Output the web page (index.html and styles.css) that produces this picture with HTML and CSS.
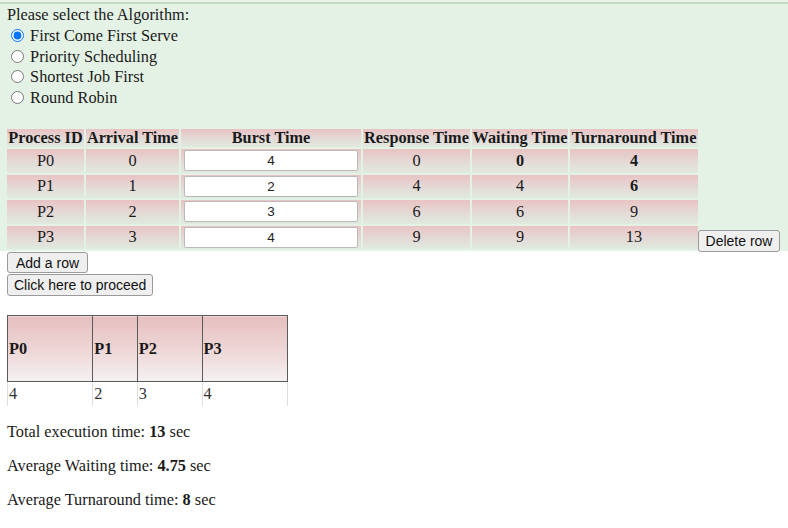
FILE: index.html
```html
<!DOCTYPE html>
<html>
<head>
<meta charset="utf-8">
<link rel="stylesheet" href="styles.css">
</head>
<body>
<div class="panel">
  <div class="prompt">Please select the Algorithm:</div>
  <label class="opt"><input type="radio" name="algo" checked> First Come First Serve</label>
  <label class="opt"><input type="radio" name="algo"> Priority Scheduling</label>
  <label class="opt"><input type="radio" name="algo"> Shortest Job First</label>
  <label class="opt"><input type="radio" name="algo"> Round Robin</label>
  <table class="proc">
    <tr>
      <th class="cell c-id">Process ID</th>
      <th class="cell c-arr">Arrival Time</th>
      <th class="cell c-burst">Burst Time</th>
      <th class="cell c-resp">Response Time</th>
      <th class="cell c-wait">Waiting Time</th>
      <th class="cell c-turn">Turnaround Time</th>
    </tr>
    <tr>
      <td class="cell">P0</td><td class="cell">0</td>
      <td class="cell"><input class="burst" type="text" value="4"></td>
      <td class="cell">0</td><td class="cell strong">0</td><td class="cell strong">4</td>
    </tr>
    <tr>
      <td class="cell">P1</td><td class="cell">1</td>
      <td class="cell"><input class="burst" type="text" value="2"></td>
      <td class="cell">4</td><td class="cell">4</td><td class="cell strong">6</td>
    </tr>
    <tr>
      <td class="cell">P2</td><td class="cell">2</td>
      <td class="cell"><input class="burst" type="text" value="3"></td>
      <td class="cell">6</td><td class="cell">6</td><td class="cell">9</td>
    </tr>
    <tr>
      <td class="cell">P3</td><td class="cell">3</td>
      <td class="cell"><input class="burst" type="text" value="4"></td>
      <td class="cell">9</td><td class="cell">9</td><td class="cell">13</td>
      <td class="action"><button class="btn del">Delete row</button></td>
    </tr>
  </table>
</div>
<div class="content">
  <div class="btns">
    <button class="btn add">Add a row</button>
    <button class="btn">Click here to proceed</button>
  </div>
  <table class="gantt">
    <tr class="bars">
      <th style="width:84px">P0</th>
      <th style="width:42px">P1</th>
      <th style="width:63px">P2</th>
      <th style="width:84px">P3</th>
    </tr>
    <tr class="times">
      <td>4</td><td>2</td><td>3</td><td>4</td>
    </tr>
  </table>
  <p class="stat first">Total execution time: <b>13</b> sec</p>
  <p class="stat">Average Waiting time: <b>4.75</b> sec</p>
  <p class="stat">Average Turnaround time: <b>8</b> sec</p>
</div>
</body>
</html>
```
FILE: styles.css
```css
html, body {
  margin: 0;
  padding: 0;
  background: #ffffff;
}
body {
  font-family: "Liberation Serif", "Times New Roman", serif;
  font-size: 16.3px;
  color: #1a1a1a;
}
.panel {
  margin-top: 2px;
  background: #e4f2e5;
  border-top: 2px solid #c2dcc3;
  box-shadow: 0 -2px 0 #eaf4ea;
  padding: 2px 0 0 7px;
}
.prompt {
  line-height: 18px;
  margin-bottom: 2px;
}
.opt {
  display: block;
  line-height: 20.5px;
  height: 20.5px;
}
.opt input {
  margin: 0 2px 0 4px;
  width: 13px;
  height: 13px;
  vertical-align: -1px;
}
.proc {
  border-spacing: 2px;
  margin: 19px 0 0 -2px;
}
.proc .cell {
  padding: 1px 1px;
  text-align: center;
  background: linear-gradient(to bottom, #e9c3c3 0%, #e4d8d6 50%, #e0eadf 100%);
  line-height: 18px;
  white-space: nowrap;
}
.proc th.cell {
  font-weight: bold;
  padding: 0;
  height: 18px;
}
.proc td.cell {
  height: 21.5px;
}
.c-id { width: 77px; }
.c-arr { width: 93px; }
.c-burst { width: 178px; }
.c-resp { width: 107px; }
.c-wait { width: 96px; }
.c-turn { width: 128px; }
.proc .strong {
  font-weight: bold;
}
.burst {
  box-sizing: border-box;
  width: 174px;
  height: 21px;
  margin: 0 2px;
  padding: 1px 2px;
  border: 1px solid #b9b9b9;
  border-radius: 2px;
  background: #ffffff;
  font-family: "Liberation Sans", Arial, sans-serif;
  font-size: 13.5px;
  color: #222;
  text-align: center;
}
.action {
  vertical-align: bottom;
  padding: 0;
  white-space: nowrap;
}
.btn {
  font-family: "Liberation Sans", Arial, sans-serif;
  font-size: 14px;
  color: #111;
  background: #efefef;
  border: 1px solid #9a9a9a;
  border-radius: 3px;
  padding: 1px 6px;
  height: 22px;
  line-height: 18px;
  white-space: nowrap;
}
.del {
  position: relative;
  top: 3px;
  margin-left: -2px;
  width: 82px;
}
.content {
  padding: 0 7px;
}
.btns {
  display: flex;
  flex-direction: column;
  align-items: flex-start;
  gap: 1px;
  margin-top: 1px;
}
.btns .add {
  height: 21px;
  padding: 1px 8px;
}
.gantt {
  border-collapse: collapse;
  margin-top: 19px;
  width: 281px;
}
.gantt .bars th {
  height: 65px;
  border: 1px solid #5a5a5a;
  background: linear-gradient(to bottom, #e6bfbf 0%, #eed8d8 55%, #f4f1f1 100%);
  text-align: left;
  vertical-align: middle;
  padding: 0 1px;
  font-weight: bold;
}
.gantt .times td {
  height: 22px;
  border-left: 1px solid #dedede;
  border-right: 1px solid #dedede;
  text-align: left;
  padding: 1px 1px;
  color: #333;
}
.stat {
  margin: 16px 0;
  line-height: 18px;
}
.stat.first {
  margin-top: 17px;
}
```
